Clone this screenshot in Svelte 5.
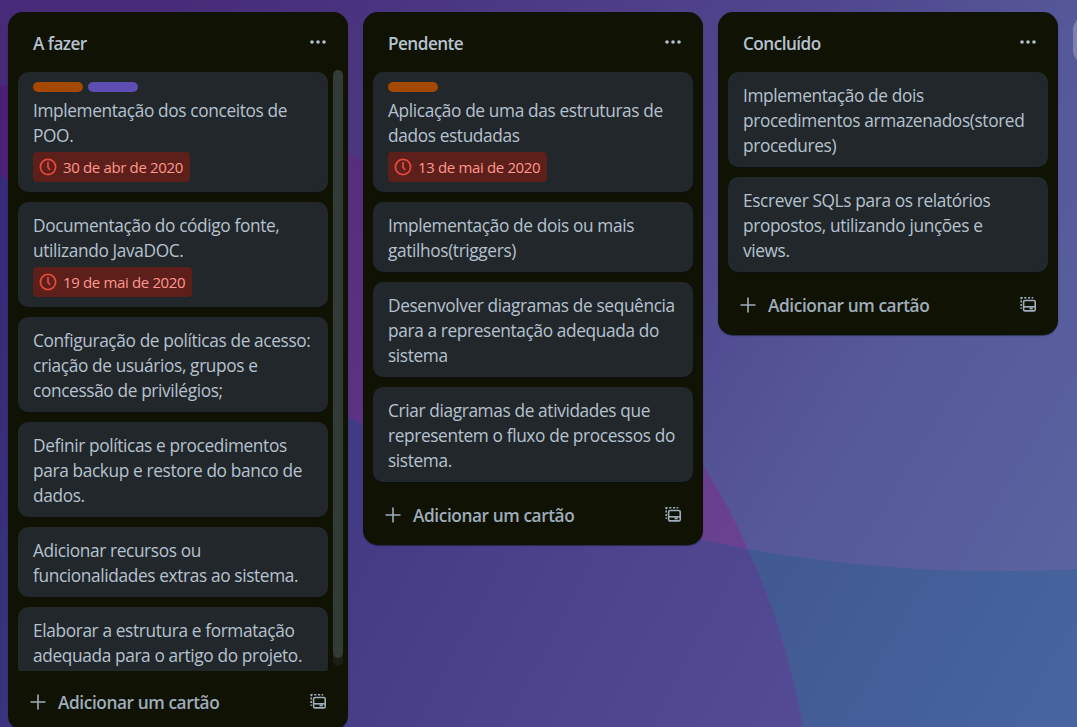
<script>
  const columns = [
    {
      title: 'A fazer', scroll: true,
      cards: [
        { labels: ['orange', 'purple'], lines: ['Implementação dos conceitos de', 'POO.'], due: '30 de abr de 2020' },
        { lines: ['Documentação do código fonte,', 'utilizando JavaDOC.'], due: '19 de mai de 2020' },
        { lines: ['Configuração de políticas de acesso:', 'criação de usuários, grupos e', 'concessão de privilégios;'] },
        { lines: ['Definir políticas e procedimentos', 'para backup e restore do banco de', 'dados.'] },
        { lines: ['Adicionar recursos ou', 'funcionalidades extras ao sistema.'] },
        { lines: ['Elaborar a estrutura e formatação', 'adequada para o artigo do projeto.'] }
      ]
    },
    {
      title: 'Pendente',
      cards: [
        { labels: ['orange'], lines: ['Aplicação de uma das estruturas de', 'dados estudadas'], due: '13 de mai de 2020' },
        { lines: ['Implementação de dois ou mais', 'gatilhos(triggers)'] },
        { lines: ['Desenvolver diagramas de sequência', 'para a representação adequada do', 'sistema'] },
        { lines: ['Criar diagramas de atividades que', 'representem o fluxo de processos do', 'sistema.'] }
      ]
    },
    {
      title: 'Concluído',
      cards: [
        { lines: ['Implementação de dois', 'procedimentos armazenados(stored', 'procedures)'] },
        { lines: ['Escrever SQLs para os relatórios', 'propostos, utilizando junções e', 'views.'] }
      ]
    }
  ];
</script>

<main class="board">
  <svg class="backdrop" viewBox="0 0 1077 727" preserveAspectRatio="none" aria-hidden="true">
    <defs>
      <linearGradient id="base" gradientUnits="userSpaceOnUse" x1="100" y1="100" x2="1000" y2="650">
        <stop offset="0" stop-color="#472b78" /><stop offset=".55" stop-color="#50478e" /><stop offset=".74" stop-color="#555799" /><stop offset="1" stop-color="#5a629f" />
      </linearGradient>
      <linearGradient id="indigo" gradientUnits="userSpaceOnUse" x1="0" y1="300" x2="800" y2="727">
        <stop offset="0" stop-color="#352b7a" /><stop offset=".5" stop-color="#443d86" /><stop offset="1" stop-color="#544b94" />
      </linearGradient>
      <linearGradient id="plum" gradientUnits="userSpaceOnUse" x1="0" y1="90" x2="750" y2="540">
        <stop offset="0" stop-color="#4b1f74" /><stop offset="1" stop-color="#6b4292" />
      </linearGradient>
      <linearGradient id="blue" gradientUnits="userSpaceOnUse" x1="750" y1="540" x2="1077" y2="727">
        <stop offset="0" stop-color="#415892" /><stop offset="1" stop-color="#46659f" />
      </linearGradient>
    </defs>
    <rect width="1077" height="727" fill="url(#base)" />
    <path d="M0 86C150 60 250 100 348 153C500 220 620 330 704 467Q728 504 748 549L703 540Q500 500 348 417Q150 310 0 174Z" fill="url(#plum)" />
    <path d="M0 174Q150 310 348 417Q500 500 703 540L748 549Q786 630 803 727H0Z" fill="url(#indigo)" />
    <path d="M748 549Q910 578 1077 569V727H803Q786 630 748 549Z" fill="url(#blue)" />
  </svg>

  {#each columns as column}
    <section class="list" class:scrolling={column.scroll}>
      <header>
        <h2>{column.title}</h2>
        <svg class="dots" width="20" height="20" viewBox="0 0 20 20"><circle cx="4" cy="10" r="1.8" /><circle cx="10" cy="10" r="1.8" /><circle cx="16" cy="10" r="1.8" /></svg>
      </header>
      <div class="body">
        <div class="cards">
          {#each column.cards as card}
            <article>
              {#if card.labels}
                <div class="labels">{#each card.labels as label}<i class={label}></i>{/each}</div>
              {/if}
              <p>{#each card.lines as line}<span>{line}</span>{/each}</p>
              {#if card.due}
                <div class="due">
                  <svg width="20" height="20" viewBox="0 0 20 20"><circle cx="10" cy="10" r="7.6" /><path d="M10 5v5.3l2 2.8" /></svg>
                  <time>{card.due}</time>
                </div>
              {/if}
            </article>
          {/each}
        </div>
        {#if column.scroll}<div class="track"><div class="thumb"></div></div>{/if}
      </div>
      <footer>
        <svg class="plus" width="20" height="20" viewBox="0 0 20 20"><path d="M10 2.5v15M2.5 10h15" /></svg>
        <span>Adicionar um cartão</span>
        <svg class="template" width="20" height="20" viewBox="0 0 20 20">
          <path d="M3.2 13.8v-1.4M3.2 10.9V8.9M3.2 7.4V5.4M3.2 4.2V2.7H4.7M6.2 2.7h2.2M10 2.7h2.2M13.7 2.7h1.5" />
          <rect x="5.6" y="5.5" width="11.6" height="10.4" rx="1.4" />
          <path d="M5.8 11.8h11.2" /><path class="solid" d="M11.5 12.4h3.3v2h-3.3z" />
        </svg>
      </footer>
    </section>
  {/each}
  <div class="next"></div>
</main>

<style>
  :global(body) { margin: 0; overflow: hidden; }
  .board {
    position: relative; isolation: isolate; box-sizing: border-box;
    width: 1077px; height: 727px; padding: 12px 0 0 8px; overflow: hidden;
    display: flex; align-items: flex-start; gap: 15px;
    color: #b6c2cf; font: 17.3px/25px "Open Sans", "Noto Sans", sans-serif; letter-spacing: -.37px;
  }
  .backdrop { position: absolute; inset: 0; width: 1077px; height: 727px; z-index: -1; }
  .list {
    box-sizing: border-box; width: 340px; flex: none; padding-bottom: 10px;
    border-radius: 15px; background: #101204; box-shadow: 0 1px 1px #09102488;
  }
  header { height: 60px; box-sizing: border-box; padding: 19px 20px 0 25px; display: flex; justify-content: space-between; }
  h2 { margin: 0; font-size: 17.2px; line-height: 25px; font-weight: 650; letter-spacing: -.55px; }
  .dots { fill: #b6c2cf; margin-top: 1px; }
  .body { display: flex; padding: 0 10px; }
  .cards { width: 320px; display: flex; flex-direction: column; gap: 10px; }
  article {
    box-sizing: border-box; flex: none; padding: 10px 15px;
    background: #22272b; border-radius: 10px; box-shadow: 0 1px 1px #09102466;
  }
  .labels { display: flex; gap: 5px; height: 10px; margin-bottom: 5px; }
  .labels i { width: 50px; height: 10px; border-radius: 5px; }
  .orange { background: #a54800; }
  .purple { background: #5e4db2; }
  p { margin: 0 0 -1px; padding-top: 1px; }
  p span { display: block; white-space: nowrap; }
  article:has(.due) p { margin-bottom: 4px; }
  .due {
    display: flex; align-items: center; gap: 5px; box-sizing: border-box; width: max-content;
    height: 30px; padding: 0 7px 0 5px; border-radius: 4px; background: #5d1f1a; color: #fd9891;
    font-size: 15px; letter-spacing: -.35px;
  }
  .due svg { fill: none; stroke: #e2483d; stroke-width: 1.8; }
  .scrolling .cards { width: 310px; }
  .scrolling .body {
    height: 601px; margin-top: -2px; box-sizing: border-box; overflow: hidden;
    padding-right: 5px; justify-content: space-between;
  }
  .scrolling .cards { padding-top: 2px; }
  .track { width: 10px; height: 596px; border-radius: 5px; background: #1c1f14; }
  .thumb { height: 588px; border-radius: 5px; background: #323b35; }
  footer {
    height: 53px; box-sizing: border-box; padding: 13px 20px 0 20px; display: flex; align-items: center;
    color: #9fadbc; font-weight: 600; letter-spacing: -.42px;
  }
  .scrolling footer { height: 49px; }
  .plus { stroke: #9fadbc; stroke-width: 1.6; }
  footer span { margin-left: 10px; flex: 1; }
  .template { fill: none; stroke: #9fadbc; stroke-width: 1.6; }
  .template .solid { fill: #9fadbc; stroke: none; }
  .next { width: 20px; height: 50px; margin-top: 3px; flex: none; border-radius: 15px 0 0 15px; background: #ffffff3d; }
</style>
